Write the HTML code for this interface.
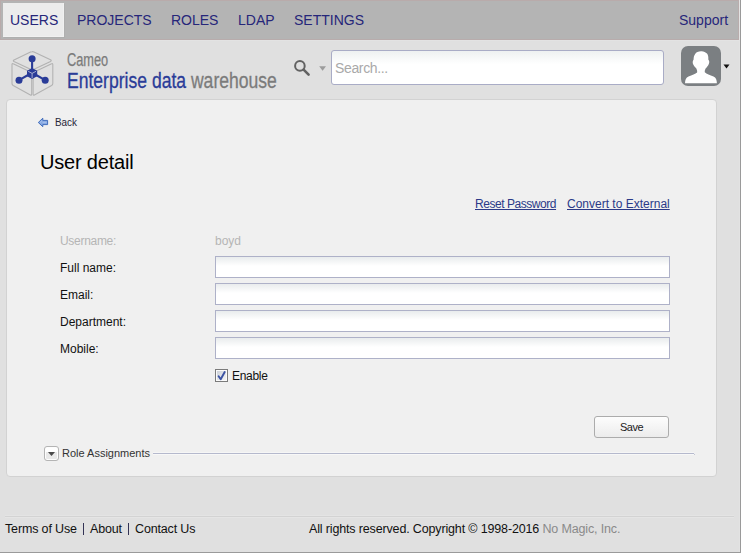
<!DOCTYPE html>
<html><head><meta charset="utf-8">
<style>
html,body{margin:0;padding:0;}
body{width:741px;height:553px;position:relative;overflow:hidden;background:#e0e0e0;font-family:"Liberation Sans",sans-serif;}
.abs{position:absolute;}
#nav{left:0;top:0;width:739px;height:40px;background:#b4b4b4;}
#navtop{left:0;top:0;width:739px;height:1px;background:#b9abab;}
#navleft{left:0;top:0;width:1px;height:40px;background:#b9abab;}
#navbot{left:0;top:39px;width:739px;height:1px;background:#b8acac;}
#navlight{left:0;top:40px;width:739px;height:1px;background:#e3e3e3;}
#tab{left:3px;top:3px;width:60px;height:33px;background:#ececec;border-right:1px solid #f1f1f1;border-bottom:1px solid #f1f1f1;box-shadow:1px 1px 0 #afafaf;}
.nv{position:absolute;top:12px;font-size:14px;color:#26267a;line-height:16px;white-space:nowrap;}
#redge{left:739px;top:0;width:1px;height:553px;background:#e3e3e3;}
#redge2{left:740px;top:0;width:1px;height:553px;background:#9a9a9a;}
#bedge{left:0;top:552px;width:741px;height:1px;background:#9a9a9a;}
.logo1{position:absolute;left:67px;top:50px;font-size:18px;line-height:20px;color:#7b7b7b;transform-origin:0 0;transform:scaleX(0.71);white-space:nowrap;-webkit-text-stroke:0.25px currentColor;}
.logo2{position:absolute;left:67px;top:68px;font-size:22px;line-height:26px;color:#7b7b7b;transform-origin:0 0;transform:scaleX(0.798);-webkit-text-stroke:0.3px currentColor;white-space:nowrap;}
.logo2 b{font-weight:normal;color:#2a3c98;}
#search{left:331px;top:50px;width:331px;height:33px;border:1px solid #a9acc6;border-radius:3px;background:linear-gradient(#eef1f1,#fff 40%);}
#search span{position:absolute;left:3px;top:9px;font-size:14px;line-height:16px;color:#a9a9a9;letter-spacing:-0.35px;}
#avatar{left:681px;top:46px;width:40px;height:40px;border-radius:7px;background:#7b7f82;overflow:hidden;}
#panel{left:6px;top:99px;width:709px;height:376px;background:#f0f0f0;border:1px solid #d2d2d2;border-radius:4px;}
.t{position:absolute;white-space:nowrap;font-size:12px;line-height:14px;color:#111;}
.inp{position:absolute;left:215px;width:453px;height:20px;border:1px solid #aeb1c8;background:linear-gradient(#e9eced,#fff 45%);}
.ft{top:522px;font-size:12.5px;line-height:15px;color:#111;letter-spacing:-0.15px;}
#foot{left:5px;top:516px;width:729px;height:1px;background:#d3d3d3;box-shadow:0 1px 0 #e5e5e5,0 -1px 0 #e4e4e4;}
</style></head>
<body>
<div id="nav" class="abs"></div>
<div id="navtop" class="abs"></div>
<div id="navleft" class="abs"></div>
<div id="navbot" class="abs"></div>
<div id="navlight" class="abs"></div>
<div class="abs" style="left:738px;top:0;width:1px;height:40px;background:#b9adad"></div>
<div id="tab" class="abs"></div>
<div class="nv" style="left:10px">USERS</div>
<div class="nv" style="left:77px">PROJECTS</div>
<div class="nv" style="left:171px">ROLES</div>
<div class="nv" style="left:238px">LDAP</div>
<div class="nv" style="left:294px">SETTINGS</div>
<div class="nv" style="left:679px">Support</div>

<!-- logo cube -->
<svg class="abs" style="left:0;top:40px" width="60" height="60" viewBox="0 40 60 60">
 <g fill="none" stroke="#b2b2b2" stroke-width="1.1" stroke-linejoin="round">
  <path d="M32.2 51.6 Q33 51.5 34 52 L50.5 59.8 Q52 60.6 50.5 61.4 L33.5 69.5 Q32.2 70.1 31 69.5 L14 61.6 Q12.6 60.8 14 60 L30.5 52 Q31.4 51.6 32.2 51.6 Z"/>
  <path d="M12 64.5 Q12 63.2 13.2 63.8 L30.6 72 Q31.7 72.6 31.7 73.8 L31.7 94 Q31.7 95.6 30.4 94.9 L13.2 85.5 Q12 84.8 12 83.5 Z"/>
  <path d="M52.8 64.5 Q52.8 63.2 51.6 63.8 L34.2 72 Q33.1 72.6 33.1 73.8 L33.1 94 Q33.1 95.6 34.4 94.9 L51.6 85.5 Q52.8 84.8 52.8 83.5 Z"/>
 </g>
 <g fill="#2a3c98">
  <circle cx="32.1" cy="58.8" r="3.5"/>
  <circle cx="19" cy="80.2" r="3.5"/>
  <circle cx="45.2" cy="80.2" r="3.5"/>
  <path d="M32.1 59 L32.1 70 M29 74.5 L19 80.2 M35.2 74.5 L45.2 80.2" stroke="#2a3c98" stroke-width="2.1" fill="none"/>
  <path d="M32.1 68 L37.2 70.8 L37.2 76.3 L32.1 79 L27 76.3 L27 70.8 Z"/>
 </g>
 <path d="M28.2 71.3 L32.1 73.4 L36 71.3 M32.1 73.4 L32.1 78" stroke="#c8cbe0" stroke-width="0.8" fill="none"/>
</svg>
<div class="logo1">Cameo</div>
<div class="logo2"><b>Enterprise data</b> warehouse</div>

<!-- search -->
<svg class="abs" style="left:290px;top:56px" width="40" height="24" viewBox="290 56 40 24">
 <circle cx="299.9" cy="65.9" r="4.8" fill="none" stroke="#626262" stroke-width="2"/>
 <path d="M303.6 69.6 L308.6 74.6" stroke="#626262" stroke-width="2.6" stroke-linecap="round"/>
 <path d="M319.2 66.2 L326 66.2 L322.6 70.8 Z" fill="#9c9c9c"/>
</svg>
<div id="search" class="abs"><span>Search...</span></div>

<!-- avatar -->
<div id="avatar" class="abs">
 <svg width="40" height="40" viewBox="0 0 40 40">
  <path fill="#fff" d="M14.2 8 C15 6 17.5 5.3 20 5.2 C22.5 5 24.5 6 26 7.5 C27.2 9 27.5 11 27.3 13.5 C28.3 14.5 28.6 16.5 27.8 18 C27.2 19.5 26 21 24.6 22.6 C24 23.8 23.6 25 23.8 26.3 C25.5 28 29 29.3 32.5 30.5 C35 31.5 35.8 34 35.9 37.2 L4 37.2 C4.1 34 5 31.5 7.5 30.5 C11 29.3 14.5 28 16.1 26.6 C16.4 25 16 23.8 15.2 22.2 C13.8 21 12.6 19.5 12 18 C11.4 16.5 11.8 14.5 12.6 13.5 C12.6 11.5 13 9.5 14.2 8 Z"/>
 </svg>
</div>
<svg class="abs" style="left:723px;top:64px" width="8" height="6"><path d="M0.5 0.5 L6.5 0.5 L3.5 4.5 Z" fill="#111"/></svg>

<!-- panel -->
<div id="panel" class="abs"></div>
<svg class="abs" style="left:34px;top:112px" width="20" height="20" viewBox="0 0 20 20">
 <path d="M4.3 10.5 L8.8 6.2 L8.8 8.4 L13.6 8.4 L13.6 12.6 L8.8 12.6 L8.8 14.7 Z" fill="#86a8e2" stroke="#3564b8" stroke-width="0.9" stroke-linejoin="miter"/>
 <path d="M6 10.5 L8 8.7 M8.5 10.3 L12.5 10.3" stroke="#b5cbf0" stroke-width="0.8" fill="none"/>
</svg>
<div class="t" style="left:55px;top:115px;font-size:11px;color:#262638;transform-origin:0 0;transform:scaleX(0.9)">Back</div>
<div class="t" style="left:40px;top:151px;font-size:20px;line-height:22px;color:#000;letter-spacing:-0.2px">User detail</div>

<div class="t" style="left:475px;top:197px;color:#2b3a88;text-decoration:underline;letter-spacing:-0.45px">Reset Password</div>
<div class="t" style="left:567px;top:197px;color:#2b3a88;text-decoration:underline">Convert to External</div>

<div class="t" style="left:60px;top:234px;color:#b5b5b5;letter-spacing:-0.3px">Username:</div>
<div class="t" style="left:215px;top:234px;color:#b5b5b5">boyd</div>
<div class="t" style="left:60px;top:261px;">Full name:</div>
<div class="t" style="left:60px;top:288px;">Email:</div>
<div class="t" style="left:60px;top:315px;">Department:</div>
<div class="t" style="left:60px;top:342px;">Mobile:</div>
<div class="inp" style="top:256px"></div>
<div class="inp" style="top:283px"></div>
<div class="inp" style="top:310px"></div>
<div class="inp" style="top:337px"></div>

<svg class="abs" style="left:215px;top:369px" width="13" height="13" viewBox="0 0 13 13">
 <defs><linearGradient id="cb" x1="0" y1="0" x2="1" y2="1"><stop offset="0" stop-color="#cdd2da"/><stop offset="1" stop-color="#f4f4f4"/></linearGradient></defs>
 <rect x="0.5" y="0.5" width="12" height="12" fill="#fbfbfb" stroke="#7b7b7b"/>
 <rect x="2" y="2" width="9" height="9" fill="url(#cb)"/>
 <path d="M3.6 7.3 L5.7 10.2 L9.7 3" fill="none" stroke="#3b52a3" stroke-width="1.9" stroke-linecap="round" stroke-linejoin="round"/>
</svg>
<div class="t" style="left:232px;top:369px;letter-spacing:-0.3px">Enable</div>

<div class="abs" style="left:594px;top:416px;width:73px;height:20px;border:1px solid #acacac;border-radius:3px;background:linear-gradient(#fdfdfd,#ececec)"></div>
<div class="t" style="left:620px;top:420px;font-size:11px;width:23px;letter-spacing:-0.5px;color:#222">Save</div>

<div class="abs" style="left:44px;top:446px;width:13px;height:13px;border:1px solid #b4b4b4;border-radius:3px;background:linear-gradient(#fff 38%,#e9e9e9 42%,#e9e9e9);box-shadow:inset 0 0 0 1px #fdfdfd"></div>
<svg class="abs" style="left:48px;top:452px" width="8" height="5"><path d="M0 0 L7 0 L3.5 4 Z" fill="#4a4a4a"/></svg>
<div class="t" style="left:62px;top:447px;font-size:11px;line-height:13px;color:#333">Role Assignments</div>
<div class="abs" style="left:153px;top:452px;width:541px;height:1px;background:#f6f6f6"></div>
<div class="abs" style="left:153px;top:454px;width:541px;height:1px;background:#f8f8f8"></div>
<div class="abs" style="left:153px;top:453px;width:541px;height:1px;background:#b5b9cd"></div>
<div class="abs" style="left:694px;top:454px;width:1px;height:1px;background:#c4c7d6"></div>

<!-- footer -->
<div id="foot" class="abs"></div>
<div class="t ft" style="left:5px">Terms of Use</div>
<div class="abs" style="left:83px;top:523px;width:1px;height:12px;background:#333355"></div>
<div class="t ft" style="left:90px">About</div>
<div class="abs" style="left:128px;top:523px;width:1px;height:12px;background:#333355"></div>
<div class="t ft" style="left:135px">Contact Us</div>
<div class="t" style="left:309px;top:522px;font-size:12.5px;line-height:15px;color:#111;letter-spacing:-0.15px">All rights reserved. Copyright © 1998-2016 <span style="color:#8a8a8a">No Magic, Inc.</span></div>

<div id="redge" class="abs"></div>
<div id="redge2" class="abs"></div>
<div id="bedge" class="abs"></div>
</body></html>
